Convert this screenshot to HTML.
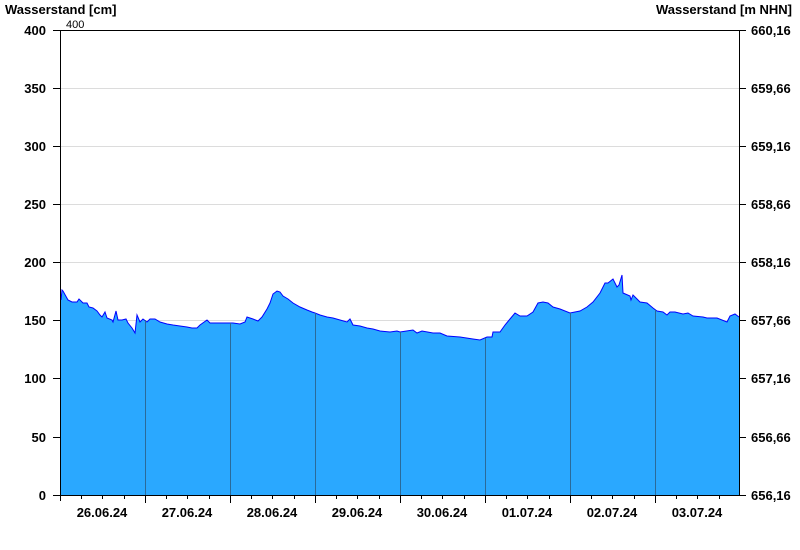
<!DOCTYPE html>
<html><head><meta charset="utf-8"><style>
html,body{margin:0;padding:0;background:#fff;width:800px;height:550px;overflow:hidden}
svg{display:block}
text{font-family:"Liberation Sans",Arial,sans-serif;font-weight:bold;font-size:13px;fill:#000}
</style></head><body>
<svg width="800" height="550" xmlns="http://www.w3.org/2000/svg">
<text x="5" y="14">Wasserstand [cm]</text>
<text x="792" y="14" text-anchor="end">Wasserstand [m NHN]</text>
<text x="66" y="28" style="font-weight:normal;font-size:11px">400</text>
<g stroke="#dcdcdc" stroke-width="1">
<line x1="60" x2="740" y1="88.5" y2="88.5"/><line x1="60" x2="740" y1="146.5" y2="146.5"/>
<line x1="60" x2="740" y1="204.5" y2="204.5"/><line x1="60" x2="740" y1="262.5" y2="262.5"/>
<line x1="60" x2="740" y1="320.5" y2="320.5"/><line x1="60" x2="740" y1="378.5" y2="378.5"/>
<line x1="60" x2="740" y1="437.5" y2="437.5"/>
</g>
<polygon fill="#2aa8ff" stroke="none" points="61,495 61,300 62,290 63,291 68,300 72,302 77,302 79,299 83,303 87,303 89,307 93,308 97,311 100,315 102,317 105,312 107,318 112,320 113,322 116,311 118,320 122,320 126,319 128,323 132,328 135,333 137,315 140,322 143,319 147,322 150,319 155,319 160,322 167,324 173,325 180,326 187,327 192,328 197,328 200,325 207,320 210,323 220,323 230,323 233,323 240,324 245,322 247,317 253,319 258,321 262,317 267,309 270,303 273,294 277,291 280,292 283,296 288,299 293,303 300,307 307,310 312,312 315,313 320,315 327,317 333,318 340,320 347,322 350,319 353,325 360,326 367,328 373,329 380,331 390,332 397,331 400,332 413,330 417,333 422,331 433,333 440,333 447,336 460,337 473,339 480,340 487,337 492,337 493,332 500,332 505,325 510,319 515,313 520,316 527,316 533,312 538,303 543,302 548,303 553,307 560,309 570,313 580,311 587,307 593,302 600,293 605,283 608,283 613,279 617,287 619,285 622,275 623,293 630,296 631,300 633,295 640,302 647,303 653,308 657,311 663,312 667,315 670,312 675,312 683,314 688,313 693,316 703,317 707,318 717,318 727,322 730,316 735,314 739,317 739,495"/>
<polyline fill="none" stroke="#0000ff" stroke-width="1" points="61,300 62,290 63,291 68,300 72,302 77,302 79,299 83,303 87,303 89,307 93,308 97,311 100,315 102,317 105,312 107,318 112,320 113,322 116,311 118,320 122,320 126,319 128,323 132,328 135,333 137,315 140,322 143,319 147,322 150,319 155,319 160,322 167,324 173,325 180,326 187,327 192,328 197,328 200,325 207,320 210,323 220,323 230,323 233,323 240,324 245,322 247,317 253,319 258,321 262,317 267,309 270,303 273,294 277,291 280,292 283,296 288,299 293,303 300,307 307,310 312,312 315,313 320,315 327,317 333,318 340,320 347,322 350,319 353,325 360,326 367,328 373,329 380,331 390,332 397,331 400,332 413,330 417,333 422,331 433,333 440,333 447,336 460,337 473,339 480,340 487,337 492,337 493,332 500,332 505,325 510,319 515,313 520,316 527,316 533,312 538,303 543,302 548,303 553,307 560,309 570,313 580,311 587,307 593,302 600,293 605,283 608,283 613,279 617,287 619,285 622,275 623,293 630,296 631,300 633,295 640,302 647,303 653,308 657,311 663,312 667,315 670,312 675,312 683,314 688,313 693,316 703,317 707,318 717,318 727,322 730,316 735,314 739,317"/>
<g stroke="#2a6a9a" stroke-width="1">
<line x1="145.5" x2="145.5" y1="320" y2="495"/><line x1="230.5" x2="230.5" y1="323" y2="495"/>
<line x1="315.5" x2="315.5" y1="313" y2="495"/><line x1="400.5" x2="400.5" y1="332" y2="495"/>
<line x1="485.5" x2="485.5" y1="338" y2="495"/><line x1="570.5" x2="570.5" y1="313" y2="495"/>
<line x1="655.5" x2="655.5" y1="310" y2="495"/>
</g>
<g stroke="#000" stroke-width="1">
<line x1="60.5" x2="60.5" y1="30" y2="501"/>
<line x1="739.5" x2="739.5" y1="30" y2="495"/>
<line x1="60" x2="746" y1="30.5" y2="30.5"/>
<line x1="53" x2="740" y1="495.5" y2="495.5"/>
<line x1="53" x2="60" y1="88.5" y2="88.5"/><line x1="53" x2="60" y1="146.5" y2="146.5"/>
<line x1="53" x2="60" y1="204.5" y2="204.5"/><line x1="53" x2="60" y1="262.5" y2="262.5"/>
<line x1="53" x2="60" y1="320.5" y2="320.5"/><line x1="53" x2="60" y1="378.5" y2="378.5"/>
<line x1="53" x2="60" y1="437.5" y2="437.5"/><line x1="53" x2="60" y1="30.5" y2="30.5"/>
<line x1="740" x2="746" y1="88.5" y2="88.5"/><line x1="740" x2="746" y1="146.5" y2="146.5"/>
<line x1="740" x2="746" y1="204.5" y2="204.5"/><line x1="740" x2="746" y1="262.5" y2="262.5"/>
<line x1="740" x2="746" y1="320.5" y2="320.5"/><line x1="740" x2="746" y1="378.5" y2="378.5"/>
<line x1="740" x2="746" y1="437.5" y2="437.5"/><line x1="740" x2="746" y1="495.5" y2="495.5"/>
<line x1="145.5" x2="145.5" y1="495" y2="503"/><line x1="230.5" x2="230.5" y1="495" y2="503"/>
<line x1="315.5" x2="315.5" y1="495" y2="503"/><line x1="400.5" x2="400.5" y1="495" y2="503"/>
<line x1="485.5" x2="485.5" y1="495" y2="503"/><line x1="570.5" x2="570.5" y1="495" y2="503"/>
<line x1="655.5" x2="655.5" y1="495" y2="503"/>
<line x1="81.5" x2="81.5" y1="495" y2="499"/><line x1="102.5" x2="102.5" y1="495" y2="499"/><line x1="124.5" x2="124.5" y1="495" y2="499"/>
<line x1="166.5" x2="166.5" y1="495" y2="499"/><line x1="187.5" x2="187.5" y1="495" y2="499"/><line x1="209.5" x2="209.5" y1="495" y2="499"/>
<line x1="251.5" x2="251.5" y1="495" y2="499"/><line x1="272.5" x2="272.5" y1="495" y2="499"/><line x1="294.5" x2="294.5" y1="495" y2="499"/>
<line x1="336.5" x2="336.5" y1="495" y2="499"/><line x1="357.5" x2="357.5" y1="495" y2="499"/><line x1="379.5" x2="379.5" y1="495" y2="499"/>
<line x1="421.5" x2="421.5" y1="495" y2="499"/><line x1="442.5" x2="442.5" y1="495" y2="499"/><line x1="464.5" x2="464.5" y1="495" y2="499"/>
<line x1="506.5" x2="506.5" y1="495" y2="499"/><line x1="527.5" x2="527.5" y1="495" y2="499"/><line x1="549.5" x2="549.5" y1="495" y2="499"/>
<line x1="591.5" x2="591.5" y1="495" y2="499"/><line x1="612.5" x2="612.5" y1="495" y2="499"/><line x1="634.5" x2="634.5" y1="495" y2="499"/>
<line x1="676.5" x2="676.5" y1="495" y2="499"/><line x1="697.5" x2="697.5" y1="495" y2="499"/><line x1="719.5" x2="719.5" y1="495" y2="499"/>
</g>
<g text-anchor="end">
<text x="46" y="35">400</text><text x="46" y="93">350</text><text x="46" y="151">300</text>
<text x="46" y="209">250</text><text x="46" y="267">200</text><text x="46" y="325">150</text>
<text x="46" y="383">100</text><text x="46" y="442">50</text><text x="46" y="500">0</text>
</g>
<g>
<text x="751" y="35">660,16</text><text x="751" y="93">659,66</text><text x="751" y="151">659,16</text>
<text x="751" y="209">658,66</text><text x="751" y="267">658,16</text><text x="751" y="325">657,66</text>
<text x="751" y="383">657,16</text><text x="751" y="442">656,66</text><text x="751" y="500">656,16</text>
</g>
<g text-anchor="middle">
<text x="102" y="517">26.06.24</text><text x="187" y="517">27.06.24</text><text x="272" y="517">28.06.24</text>
<text x="357" y="517">29.06.24</text><text x="442" y="517">30.06.24</text><text x="527" y="517">01.07.24</text>
<text x="612" y="517">02.07.24</text><text x="697" y="517">03.07.24</text>
</g>
</svg>
</body></html>
